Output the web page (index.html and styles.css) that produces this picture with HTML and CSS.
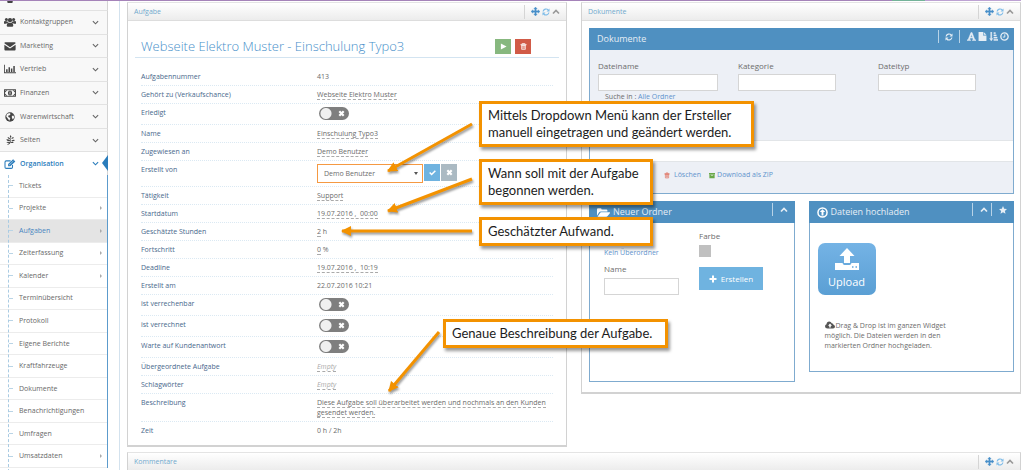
FILE: index.html
```html
<!DOCTYPE html>
<html lang="de">
<head>
<meta charset="utf-8">
<title>Aufgabe</title>
<link rel="stylesheet" href="styles.css">
</head>
<body>
<svg class="defs" aria-hidden="true">
  <symbol id="i-chev-down" viewBox="0 0 16 16"><path d="M2 5l6 6 6-6" fill="none" stroke="currentColor" stroke-width="2.6"/></symbol>
  <symbol id="i-chev-up" viewBox="0 0 16 16"><path d="M2 11l6-6 6 6" fill="none" stroke="currentColor" stroke-width="3.4"/></symbol>
  <symbol id="i-move" viewBox="0 0 16 16"><path d="M8 0l3 3.400H9.200v3.400h3.400V5L16 8l-3.400 3V9.200H9.200v3.400H11L8 16l-3-3.400h1.800V9.200H3.400V11L0 8l3.400-3v1.800h3.400V3.400H5z" fill="currentColor" stroke="currentColor" stroke-width=".6"/></symbol>
  <symbol id="i-refresh" viewBox="0 0 16 16"><path d="M2.200 7A6 6 0 0 1 12.500 4M13.800 9A6 6 0 0 1 3.500 12" fill="none" stroke="currentColor" stroke-width="2.400"/><path d="M15 1v6H9zM1 15V9h6z" fill="currentColor"/></symbol>
  <symbol id="i-users" viewBox="0 0 20 16"><g fill="currentColor"><circle cx="4" cy="4" r="2.500"/><circle cx="16" cy="4" r="2.500"/><circle cx="10" cy="5" r="3.600"/><path d="M0 11V8q0-1.500 1.500-1.500L6 7q.5 2 1 2.300Q4 9.500 4 11zM20 11V8q0-1.500-1.500-1.500L14 7q-.5 2-1 2.300 3 .2 3 1.700zM4.500 14q0-4.500 3-5 2.500 1.500 5 0 3 .5 3 5 0 2-2 2h-7q-2 0-2-2z"/></g></symbol>
  <symbol id="i-mail" viewBox="0 0 18 16"><path d="M0 3.500Q0 2 1.500 2h15Q18 2 18 3.500L9 10zM0 6l9 6 9-6v7q0 2-1.500 2h-15Q0 15 0 13z" fill="currentColor"/></symbol>
  <symbol id="i-bars" viewBox="0 0 20 16"><path d="M0 1h1.400v12.600H20V15H0zM3.500 8.500H6V13H3.500zM7.500 5H10v8H7.500zM11.500 7H14v6h-2.500zM15.500 3H18v10h-2.500z" fill="currentColor"/></symbol>
  <symbol id="i-money" viewBox="0 0 20 14"><path d="M1 1.500h18v11H1z" fill="none" stroke="currentColor" stroke-width="1.800"/><path d="M1 5q3 0 3-3M19 5q-3 0-3-3M1 9q3 0 3 3M19 9q-3 0-3 3" fill="none" stroke="currentColor" stroke-width="1.500"/><ellipse cx="10" cy="7" rx="3.500" ry="4.200" fill="currentColor"/><path d="M10 4.500v5" stroke="#fff" stroke-width="1.200"/></symbol>
  <symbol id="i-globe" viewBox="0 0 16 16"><circle cx="8" cy="8" r="7.500" fill="currentColor"/><path d="M3 3l4-1.500 2 1.500-1.500 2L5 6l.5 2 3 1.500L7 14l-2-3-3-4zM11 6l3 0 .5 3-2 3-1.500-3z" fill="#f8f8f8"/></symbol>
  <symbol id="i-leaf" viewBox="0 0 16 16"><path d="M9 0q2.500 2 0 5-2.500-3 0-5zM4 3q3 0 4 3Q5 7 4 3zM14 3q0 3.500-4 3 .5-3 4-3zM2 7q3.500-1 6 2-4 2-6-2zM16 8q-3-1.500-6 1 3 2.500 6-1zM2 11.500q3-1.500 6 0-2.500 2.500-6 0zM14 12q-2-2-5-.5 2 2.500 5 .5zM9 5v7q-1 3-5 4v-1.300Q7 13.500 7.600 11V5z" fill="currentColor"/></symbol>
  <symbol id="i-edit" viewBox="0 0 18 16"><path d="M13 9.500V13q0 2-2 2H3q-2 0-2-2V5q0-2 2-2h7" fill="none" stroke="currentColor" stroke-width="1.700"/><path d="M6 8l8-7.500L17.500 4l-8 7.500H6z" fill="currentColor"/><path d="M7.500 9.800L14.500 3" stroke="#fff" stroke-width=".8"/></symbol>
  <symbol id="i-trash" viewBox="0 0 16 16"><path d="M2 3h12v1.800H2zM5.500 3V1h5v2M3.700 6v8.500h8.600V6M6.500 7v6M9.500 7v6M3 5.500h10" fill="none" stroke="currentColor" stroke-width="1.700"/></symbol>
  <symbol id="i-play" viewBox="0 0 16 16"><path d="M2 1l13 7-13 7z" fill="currentColor"/></symbol>
  <symbol id="i-x" viewBox="0 0 16 16"><path d="M3 3l10 10M13 3L3 13" stroke="currentColor" stroke-width="5"/></symbol>
  <symbol id="i-check" viewBox="0 0 16 16"><path d="M1.500 8l4.500 4.500L14.500 4" fill="none" stroke="currentColor" stroke-width="3.600"/></symbol>
  <symbol id="i-font" viewBox="0 0 16 16"><path d="M7 1h2l4.800 12.500 2 .5v1H9.500v-1l1.700-.5-1-2.700H5.600l-.9 2.700 1.800.5v1H.2v-1l1.800-.5zm.9 3.500L6.100 9.300h3.600z" fill="currentColor" stroke="currentColor" stroke-width=".8"/></symbol>
  <symbol id="i-file" viewBox="0 0 14 16"><path d="M0 0h8v6h6v10H0zM9 0l5 5H9z" fill="currentColor"/></symbol>
  <symbol id="i-sort" viewBox="0 0 16 16"><path d="M3 0h2v11.500h2L4 16 1 11.500h2zM8.500 1h3v2h-3zM8.500 5h4.500v2H8.500zM8.500 9h6v2h-6zM8.500 13H16v2H8.500z" fill="currentColor" stroke="currentColor" stroke-width=".6"/></symbol>
  <symbol id="i-clock" viewBox="0 0 16 16"><circle cx="8" cy="8" r="6.500" fill="none" stroke="currentColor" stroke-width="2.400"/><path d="M8.500 4v5H5" fill="none" stroke="currentColor" stroke-width="1.700"/></symbol>
  <symbol id="i-folder" viewBox="0 0 20 16"><path d="M0 13V3q0-1.500 1.500-1.500h4Q7 1.500 7 3v.5h7.500Q16 3.500 16 5v1.500H6q-2 0-3 1.500zM.8 14.500L4.500 9Q5.300 7.800 6.500 7.800h13q1 0 .3 1.200l-3.500 4.500q-.8 1-2 1z" fill="currentColor"/></symbol>
  <symbol id="i-up-circle" viewBox="0 0 16 16"><circle cx="8" cy="8" r="6.600" fill="none" stroke="currentColor" stroke-width="2.200"/><path d="M8 3.200l4 4.200H9.400v5H6.600v-5H4z" fill="currentColor"/></symbol>
  <symbol id="i-star" viewBox="0 0 16 16"><path d="M8 0l2.400 5.300 5.600.6-4.200 3.900L13 15.600l-5-2.900-5 2.900 1.200-5.800L0 5.900l5.600-.6z" fill="currentColor"/></symbol>
  <symbol id="i-plus" viewBox="0 0 16 16"><path d="M6 1h4v5h5v4h-5v5H6v-5H1V6h5z" fill="currentColor"/></symbol>
  <symbol id="i-zip" viewBox="0 0 16 16"><path d="M0 1h16v4H0zM1 6h14v9H1z" fill="currentColor"/><path d="M5 7.500h6" stroke="#fff" stroke-width="1.600"/></symbol>
  <symbol id="i-upload" viewBox="0 0 24 22"><path d="M12 0l7.500 8H15v7H9V8H4.500zM0 15h7.500q.5 2 2 2h5q1.500 0 2-2H24v7H0z" fill="currentColor"/><path d="M17 19h1.500M20.500 19H22" stroke="#62a7dc" stroke-width="1.500"/></symbol>
  <symbol id="i-cloud" viewBox="0 0 20 16"><path d="M5 15q-5 0-5-4.500 0-3 3-4Q3.500 1 8.500 1q3.500 0 5 3.500 3.500 0 3.500 3 3 .8 3 3.700Q20 15 16 15z" fill="currentColor"/><path d="M10 5l4 4.500h-2.500V13h-3V9.500H6z" fill="#fff"/></symbol>
</svg>

<div class="topbar"><span class="topbar-main"></span><span class="topbar-green"></span><span class="topbar-end"></span></div>

<div class="layout">
  <nav class="sidebar">
    <div class="nav-cut"><svg><use href="#i-users"/></svg></div>
    <ul class="nav">
      <li><a href="#"><svg><use href="#i-users"/></svg><span>Kontaktgruppen</span><svg class="chev"><use href="#i-chev-down"/></svg></a></li>
      <li><a href="#"><svg><use href="#i-mail"/></svg><span>Marketing</span><svg class="chev"><use href="#i-chev-down"/></svg></a></li>
      <li><a href="#"><svg><use href="#i-bars"/></svg><span>Vertrieb</span><svg class="chev"><use href="#i-chev-down"/></svg></a></li>
      <li><a href="#"><svg><use href="#i-money"/></svg><span>Finanzen</span><svg class="chev"><use href="#i-chev-down"/></svg></a></li>
      <li><a href="#"><svg><use href="#i-globe"/></svg><span>Warenwirtschaft</span><svg class="chev"><use href="#i-chev-down"/></svg></a></li>
      <li><a href="#"><svg><use href="#i-leaf"/></svg><span>Seiten</span><svg class="chev"><use href="#i-chev-down"/></svg></a></li>
      <li class="open"><a href="#"><svg><use href="#i-edit"/></svg><span>Organisation</span><svg class="chev"><use href="#i-chev-down"/></svg></a></li>
    </ul>
    <ul class="subnav">
      <li><a href="#">Tickets</a></li>
      <li class="more"><a href="#">Projekte</a></li>
      <li class="more current"><a href="#">Aufgaben</a></li>
      <li class="more"><a href="#">Zeiterfassung</a></li>
      <li class="more"><a href="#">Kalender</a></li>
      <li><a href="#">Terminübersicht</a></li>
      <li><a href="#">Protokoll</a></li>
      <li><a href="#">Eigene Berichte</a></li>
      <li><a href="#">Kraftfahrzeuge</a></li>
      <li><a href="#">Dokumente</a></li>
      <li><a href="#">Benachrichtigungen</a></li>
      <li><a href="#">Umfragen</a></li>
      <li class="more"><a href="#">Umsatzdaten</a></li>
    </ul>
  </nav>

  <main class="main">
    <div class="columns">
      <section class="card">
        <header class="card-head"><h2>Aufgabe</h2>
          <div class="tools"><svg class="t-move"><use href="#i-move"/></svg><svg class="t-ref"><use href="#i-refresh"/></svg><svg class="t-up"><use href="#i-chev-up"/></svg></div>
        </header>
        <div class="task">
          <div class="task-title"><h1>Webseite Elektro Muster - Einschulung Typo3</h1>
            <button class="sq green" aria-label="Starten"><svg><use href="#i-play"/></svg></button>
            <button class="sq red" aria-label="Löschen"><svg><use href="#i-trash"/></svg></button>
          </div>
          <dl class="props">
            <div><dt>Aufgabennummer</dt><dd>413</dd></div>
            <div><dt>Gehört zu (Verkaufschance)</dt><dd><span class="ed">Webseite Elektro Muster</span></dd></div>
            <div class="r-toggle"><dt><label for="t1">Erledigt</label></dt><dd><span class="toggle"><input type="checkbox" id="t1"><svg><use href="#i-x"/></svg></span></dd></div>
            <div><dt>Name</dt><dd><span class="ed">Einschulung Typo3</span></dd></div>
            <div><dt>Zugewiesen an</dt><dd><span class="ed">Demo Benutzer</span></dd></div>
            <div class="r-select"><dt><label for="creator">Erstellt von</label></dt><dd class="edit"><span class="select"><select id="creator"><option>Demo Benutzer</option></select></span><button class="ok" aria-label="Speichern"><svg><use href="#i-check"/></svg></button><button class="cancel" aria-label="Abbrechen"><svg><use href="#i-x"/></svg></button></dd></div>
            <div><dt>Tätigkeit</dt><dd><span class="ed">Support</span></dd></div>
            <div><dt>Startdatum</dt><dd><span class="ed">19.07.2016 ,&nbsp; 00:00</span></dd></div>
            <div><dt>Geschätzte Stunden</dt><dd><span class="ed">2</span> h</dd></div>
            <div><dt>Fortschritt</dt><dd><span class="ed">0</span> %</dd></div>
            <div><dt>Deadline</dt><dd><span class="ed">19.07.2016 ,&nbsp; 10:19</span></dd></div>
            <div><dt>Erstellt am</dt><dd>22.07.2016 10:21</dd></div>
            <div class="r-toggle"><dt><label for="t2">ist verrechenbar</label></dt><dd><span class="toggle"><input type="checkbox" id="t2"><svg><use href="#i-x"/></svg></span></dd></div>
            <div class="r-toggle"><dt><label for="t3">ist verrechnet</label></dt><dd><span class="toggle"><input type="checkbox" id="t3"><svg><use href="#i-x"/></svg></span></dd></div>
            <div class="r-toggle"><dt><label for="t4">Warte auf Kundenantwort</label></dt><dd><span class="toggle"><input type="checkbox" id="t4"><svg><use href="#i-x"/></svg></span></dd></div>
            <div><dt>Übergeordnete Aufgabe</dt><dd><span class="ed empty">Empty</span></dd></div>
            <div><dt>Schlagwörter</dt><dd><span class="ed empty">Empty</span></dd></div>
            <div class="r-desc"><dt>Beschreibung</dt><dd><span class="ed">Diese Aufgabe soll überarbeitet werden und nochmals an den Kunden<br>gesendet werden.</span></dd></div>
            <div><dt>Zeit</dt><dd>0 h / 2h</dd></div>
          </dl>
        </div>
      </section>

      <section class="card">
        <header class="card-head"><h2>Dokumente</h2>
          <div class="tools"><svg class="t-move"><use href="#i-move"/></svg><svg class="t-ref"><use href="#i-refresh"/></svg><svg class="t-up"><use href="#i-chev-up"/></svg></div>
        </header>
        <div class="docs">
          <section class="widget">
            <header class="w-head"><h3>Dokumente</h3>
              <div class="w-tools"><span class="grp wide"><svg><use href="#i-refresh"/></svg></span><span class="grp icons"><svg><use href="#i-font"/></svg><svg><use href="#i-file"/></svg><svg><use href="#i-sort"/></svg><svg><use href="#i-clock"/></svg></span></div>
            </header>
            <div class="filters">
              <div class="field"><label for="fn">Dateiname</label><input id="fn" type="text"><p class="hint">Suche in : <a href="#">Alle Ordner</a></p></div>
              <div class="field"><label for="fk">Kategorie</label><input id="fk" type="text"></div>
              <div class="field"><label for="ft">Dateityp</label><input id="ft" type="text"></div>
            </div>
            <div class="list"></div>
            <div class="actions"><a href="#" class="del"><svg><use href="#i-trash"/></svg>Löschen</a><a href="#" class="zip"><svg><use href="#i-zip"/></svg>Download als ZIP</a></div>
          </section>
          <div class="pair">
            <section class="widget">
              <header class="w-head"><h3><svg class="ic-folder"><use href="#i-folder"/></svg>Neuer Ordner</h3>
                <div class="w-tools"><span class="grp"><svg><use href="#i-chev-up"/></svg></span></div></header>
              <div class="folder">
                <div class="f-left"><a href="#">Kein Überordner</a><label for="nm">Name</label><input id="nm" type="text"></div>
                <div class="f-right"><span>Farbe</span><button class="swatch" aria-label="Farbe"></button><button class="create"><svg><use href="#i-plus"/></svg>Erstellen</button></div>
              </div>
            </section>
            <section class="widget">
              <header class="w-head"><h3><svg class="ic-up"><use href="#i-up-circle"/></svg>Dateien hochladen</h3>
                <div class="w-tools"><span class="grp"><svg><use href="#i-chev-up"/></svg></span><span class="grp"><svg><use href="#i-star"/></svg></span></div></header>
              <div class="uploader">
                <button class="upload"><svg><use href="#i-upload"/></svg>Upload</button>
                <p><svg><use href="#i-cloud"/></svg>Drag &amp; Drop ist im ganzen Widget möglich. Die Dateien werden in den markierten Ordner hochgeladen.</p>
              </div>
            </section>
          </div>
        </div>
      </section>
    </div>

    <section class="card comments">
      <header class="card-head"><h2>Kommentare</h2>
        <div class="tools"><svg class="t-move"><use href="#i-move"/></svg><svg class="t-ref"><use href="#i-refresh"/></svg><svg class="t-up"><use href="#i-chev-up"/></svg></div>
      </header>
    </section>
  </main>
</div>

<svg class="arrows" viewBox="0 0 1021 470" aria-hidden="true">
  <defs><marker id="head" viewBox="0 0 10 10" refX="9" refY="5" markerWidth="10" markerHeight="10" markerUnits="userSpaceOnUse" orient="auto"><path d="M0 0l10 5-10 5z"/></marker></defs>
  <line x1="472" y1="124" x2="388" y2="171"/>
  <line x1="472" y1="179" x2="388" y2="211"/>
  <line x1="472" y1="231" x2="342" y2="231"/>
  <line x1="439" y1="332" x2="389" y2="391"/>
</svg>
<p class="callout c1">Mittels Dropdown Menü kann der Ersteller<br>manuell eingetragen und geändert werden.</p>
<p class="callout c2">Wann soll mit der Aufgabe<br>begonnen werden.</p>
<p class="callout c3">Geschätzter Aufwand.</p>
<p class="callout c4">Genaue Beschreibung der Aufgabe.</p>
</body>
</html>
```
FILE: styles.css
```css
* { box-sizing: border-box; margin: 0; padding: 0; }
body {
  position: relative;
  height: 100vh;
  overflow: hidden;
  background: #fff;
  color: #6c6c6c;
  font-family: "Open Sans", "Noto Sans", sans-serif;
  font-size: 7px;
  line-height: 10px;
}
button, input, select { font: inherit; color: inherit; border: 0; border-radius: 0; }
ul { list-style: none; }
a { color: #5f93cd; text-decoration: none; }
svg { display: block; flex: none; }
.defs { position: absolute; width: 0; height: 0; }

.topbar { display: flex; height: 1px; }
.topbar-main { flex: 892; background: #a583b9; }
.topbar-green { flex: 33; background: #74b399; }
.topbar-end { flex: 96; background: #bda2d3; }

.layout { display: flex; }

/* Sidebar */
.sidebar { width: 108px; flex: none; }
.nav-cut { height: 9px; background: #f8f8f8; overflow: hidden; padding-left: 5px; color: #444; border-right: 1px solid #d4d4d4; }
.nav-cut svg { width: 10px; height: 8px; margin-top: -6px; }
.nav { display: grid; grid-auto-rows: 1fr; height: 165px; }
.nav li { border-top: 1px solid #e2e2e2; border-right: 1px solid #d4d4d4; background: #f8f8f8; }
.nav a { display: flex; align-items: center; height: 100%; padding: 0 8px 0 4px; color: #686868; }
.nav a svg { width: 12px; height: 10px; color: #444; margin-right: 4px; }
.nav a span { flex: 1; }
.nav a .chev { width: 7px; height: 7px; margin: 0; color: #666; }
.nav .open { background: #fff; position: relative; }
.nav .open a, .nav .open a svg { color: #2b7dbc; }
.nav .open a { font-weight: 600; }
.nav .open::after {
  content: ""; position: absolute; right: -1px; top: 3px;
  border: solid transparent; border-width: 8px 6px 8px 0; border-right-color: #2b7dbc;
}
.subnav { display: grid; grid-auto-rows: 1fr; height: 293px; border-right: 1px solid #5c9bcc; position: relative; }
.subnav::before { content: ""; position: absolute; left: 8px; top: 0; bottom: -4px; border-left: 1px dashed #a9cbe3; }
.subnav li { display: flex; align-items: center; border-bottom: 1px solid #ececec; }
.subnav li::before { content: ""; width: 4px; margin-left: 9px; border-top: 1px solid #b9d4e6; }
.subnav a { color: #686868; flex: 1; padding-left: 6px; }
.subnav .current { background: #e4e4e4; }
.subnav .current a { color: #4884c0; }
.subnav .more::after { content: ""; border: solid transparent; border-width: 2px 0 2px 2px; border-left-color: #aaa; margin-right: 5px; }

/* Cards */
.main { flex: 1; min-width: 0; margin-left: 11px; border-left: 1px solid #d3e2ee; padding: 1px 0 0 7px; }
.columns { display: grid; grid-template-columns: 1fr 1fr; gap: 14px; align-items: start; }
.card { border: 1px solid #d2d2d2; border-top-color: #e4e4e4; border-bottom-width: 2px; background: #fff; }
.card-head { display: flex; align-items: center; height: 18px; padding: 0 6px; background: linear-gradient(#fff, #ececec); border-bottom: 1px solid #ddd; }
.card-head h2 { flex: 1; font-size: 7px; font-weight: 400; color: #71a9cd; }
.tools { display: flex; align-items: center; gap: 2px; height: 14px; padding-left: 6px; border-left: 1px solid #d5d5d5; color: #478fca; }
.tools svg { width: 9px; height: 9px; }
.tools .t-ref { color: #7fbce8; width: 8px; height: 8px; }
.tools .t-up { color: #999; width: 8px; height: 8px; }
.comments { margin-top: 5px; }

/* Task */
.task { padding: 14px 7px 5px; }
.task-title { display: flex; align-items: center; gap: 4px; height: 23px; padding: 0 28px 0 6px; border-bottom: 1px solid #d3e4f1; }
.task-title h1 { flex: 1; font-size: 13px; line-height: 18px; font-weight: 300; color: #478fca; white-space: nowrap; }
.sq { display: grid; place-items: center; width: 16px; height: 15px; color: #fff; }
.sq svg { width: 7px; height: 7px; }
.green { background: #87b87f; }
.red { background: #d15b47; }
.props { padding: 10px 6px 0; }
.props > div { display: grid; grid-template-columns: 176px 1fr; height: 18px; border-bottom: 1px dotted #dbe9f3; }
.props > div:last-child { border-bottom: 0; }
.props > .r-toggle { height: 21px; }
.props > .r-select { height: 26px; }
.props > .r-desc { height: 28px; }
.props dt { padding-top: 4px; color: #48688c; }
.props dd { padding-top: 4px; white-space: nowrap; }
.ed { border-bottom: 1px dashed #aaa; }
.empty { font-style: italic; color: #aaa; }
.toggle { position: relative; display: block; width: 30px; height: 13px; margin: -1px 0 0 2px; color: #fff; }
.toggle input { appearance: none; display: block; width: 30px; height: 13px; border-radius: 7px; background: radial-gradient(circle at 7px 50%, #f0f0f0 5px, #7f7f7f 6px); }
.toggle svg { position: absolute; right: 4px; top: 3px; width: 7px; height: 7px; }
.props .edit { display: flex; gap: 1px; padding-top: 3px; }
.select { position: relative; width: 106px; height: 19px; }
.select select { appearance: none; width: 100%; height: 100%; padding: 0 6px; border: 1px solid #f59942; background: #fff; }
.select::after { content: ""; position: absolute; right: 5px; top: 8px; border: solid transparent; border-width: 3px 2px 0; border-top-color: #555; }
.edit button { display: grid; place-items: center; width: 16px; height: 17px; color: #fff; }
.edit button svg { width: 7px; height: 7px; }
.ok { background: #6fb3e0; }
.cancel { background: #abbac3; }

/* Documents */
.docs { padding: 7px 6px 10px 7px; }
.widget { border: 1px solid #7fabcf; background: #fff; }
.w-head { display: flex; height: 22px; margin: -1px -1px 0; padding: 0 4px 0 8px; background: #4f90c1; color: #e6eef5; }
.w-head h3 { flex: 1; display: flex; align-items: center; gap: 3px; font-size: 9px; font-weight: 400; }
.w-tools { display: flex; padding-top: 2px; }
.grp { display: flex; align-items: center; gap: 2px; height: 13px; padding: 0 3px 0 7px; border-left: 1px solid #b8d3e7; }
.grp.wide { padding: 0 6px; }
.grp.icons { padding-right: 1px; }
.grp svg { width: 8px; height: 8px; }
.grp.icons svg { width: 9px; height: 9px; }
.ic-folder { width: 13px; height: 11px; color: #fff; }
.ic-up { width: 11px; height: 11px; color: #fff; }
.filters { display: grid; grid-template-columns: 120px 98px 98px; column-gap: 20px; height: 90px; padding: 11px 8px 0; background: #edf0f6; }
.filters .field:last-child { margin: 0 -22px 0 22px; }
.field label { display: block; font-size: 8px; height: 13px; }
.field input, .f-left input { display: block; width: 100%; height: 17px; padding: 0 3px; border: 1px solid #d5d5d5; background: #fff; }
.hint { padding: 1px 7px; }
.list { height: 22px; border: solid #e2e5e8; border-width: 1px 0; }
.actions { display: flex; gap: 8px; height: 31px; padding: 8px 0 0 74px; background: #edf0f6; }
.actions a { display: flex; align-items: center; gap: 4px; height: 10px; }
.actions svg { width: 6px; height: 7px; }
.actions .zip { gap: 2px; }
.del svg { color: #e0705f; }
.zip svg { color: #69a847; }
.pair { display: grid; grid-template-columns: 1fr 1fr; gap: 14px; align-items: start; margin-top: 7px; }
.folder { display: grid; grid-template-columns: 75px 1fr; column-gap: 20px; height: 158px; padding: 8px 14px; }
.f-left { padding-top: 17px; }
.f-left a { display: block; }
.f-left label { display: block; padding: 6px 0 4px; font-size: 8px; }
.f-right { display: flex; flex-direction: column; align-items: flex-start; font-size: 8px; }
.swatch { width: 12px; height: 12px; margin: 4px 0 10px; background: #c0c0c0; }
.create { display: flex; align-items: center; justify-content: center; gap: 4px; width: 64px; height: 23px; background: #6fb3e0; color: #fff; }
.create svg { width: 8px; height: 8px; }
.uploader { height: 148px; padding: 20px 8px; }
.upload { display: flex; flex-direction: column; align-items: center; gap: 4px; width: 58px; height: 52px; padding-top: 5px; border-radius: 7px; background: linear-gradient(#74b3e5, #5a9fd4); color: #fff; font-size: 11px; line-height: 16px; }
.upload svg { width: 24px; height: 22px; }
.uploader p { width: 132px; margin: 26px 0 0 7px; }
.uploader p svg { display: inline-block; vertical-align: -1px; width: 10px; height: 8px; margin-right: 1px; color: #555; }

/* Annotations */
.arrows { position: absolute; left: 0; top: 0; width: 1021px; height: 470px; pointer-events: none; filter: drop-shadow(1px 2px 1px rgba(0, 0, 0, .4)); }
.arrows line { stroke: #f39200; stroke-width: 3; marker-end: url(#head); }
.arrows path { fill: #f39200; }
.callout { position: absolute; padding: 3px 6px; border: 3px solid #f39200; background: #fff; color: #1c1c1c; font-family: Lato, "Open Sans", sans-serif; font-size: 13px; line-height: 17px; white-space: nowrap; box-shadow: 2px 3px 3px rgba(0, 0, 0, .4); }
.c1 { left: 479px; top: 101px; width: 275px; }
.c2 { left: 479px; top: 159px; width: 174px; }
.c3 { left: 479px; top: 217px; width: 174px; }
.c4 { left: 443px; top: 319px; width: 225px; }
```
